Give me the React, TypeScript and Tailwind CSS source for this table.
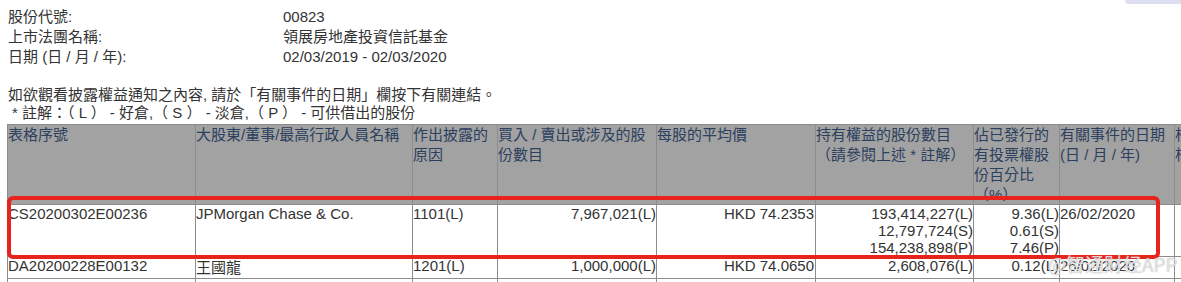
import React from "react";

const font = "font-['Liberation_Sans','Noto_Sans_CJK_TC',sans-serif]";

// column widths include the right border of each cell
const cols = "grid-cols-[188px_217px_85px_159px_159px_158px_86px_115px_120px]";

const headers: React.ReactNode[] = [
  "表格序號",
  "大股東/董事/最高行政人員名稱",
  <>作出披露的<br />原因</>,
  <>買入 / 賣出或涉及的股<br />份數目</>,
  "每股的平均價",
  <>持有權益的股份數目<br />（請參閱上述 * 註解）</>,
  <>佔已發行的<br />有投票權股<br />份百分比<br />（%）</>,
  <>有關事件的日期<br />(日 / 月 / 年)</>,
  <>根據<br />根據</>,
];

type Row = {
  serial: string;
  name: string;
  reason: string;
  shares: string;
  price: string;
  held: string[];
  pct: string[];
  date: string;
};

const rows: Row[] = [
  {
    serial: "CS20200302E00236",
    name: "JPMorgan Chase & Co.",
    reason: "1101(L)",
    shares: "7,967,021(L)",
    price: "HKD 74.2353",
    held: ["193,414,227(L)", "12,797,724(S)", "154,238,898(P)"],
    pct: ["9.36(L)", "0.61(S)", "7.46(P)"],
    date: "26/02/2020",
  },
  {
    serial: "DA20200228E00132",
    name: "王國龍",
    reason: "1201(L)",
    shares: "1,000,000(L)",
    price: "HKD 74.0650",
    held: ["2,608,076(L)"],
    pct: ["0.12(L)"],
    date: "26/02/2020",
  },
];

const cell = "border-r border-b border-[#8c8c8c] overflow-hidden whitespace-nowrap";

export default function App() {
  return (
    <div className={`relative w-[1181px] h-[282px] overflow-hidden bg-white text-[15px] text-[#333] ${font}`}>
      {/* top corner tab */}
      <div className="absolute right-0 top-0 w-[56px] h-[4px] rounded-bl-[6px] bg-[#dedef2]" />

      <div className="pt-[7px] pl-[8px] leading-[20px]">
        <div className="flex">
          <div className="w-[275px]">股份代號:</div>
          <div>00823</div>
        </div>
        <div className="flex">
          <div className="w-[275px]">上市法團名稱:</div>
          <div>領展房地產投資信託基金</div>
        </div>
        <div className="flex">
          <div className="w-[275px]">日期 (日 / 月 / 年):</div>
          <div>02/03/2019 - 02/03/2020</div>
        </div>
      </div>

      <div className="mt-[19px] pl-[8px] leading-[18px]">
        <div>如欲觀看披露權益通知之內容, 請於「有關事件的日期」欄按下有關連結。</div>
        <div className="pl-[4px] whitespace-pre">* 註解：（ L ） - 好倉,（ S ） - 淡倉,（ P ） - 可供借出的股份</div>
      </div>

      <div className={`mt-[2px] ml-[7px] grid w-max ${cols} border-t border-l border-[#8c8c8c]`}>
        {headers.map((h, i) => (
          <div key={i} className={`${cell} h-[80px] bg-[#a2a2a2] text-[#2b3f5e] leading-[20px]`}>
            {h}
          </div>
        ))}

        {rows.map((r, i) => {
          const pad = i === rows.length - 1 ? "pb-[2px]" : "";
          return (
            <React.Fragment key={r.serial}>
              <div className={`${cell} ${pad} leading-[17px]`}>{r.serial}</div>
              <div className={`${cell} ${pad} leading-[17px] ${i === 1 ? "pt-[2px]" : ""}`}>{r.name}</div>
              <div className={`${cell} ${pad} leading-[17px]`}>{r.reason}</div>
              <div className={`${cell} ${pad} leading-[17px] text-right`}>{r.shares}</div>
              <div className={`${cell} ${pad} leading-[17px] text-right pr-[1px]`}>{r.price}</div>
              <div className={`${cell} ${pad} leading-[17px] text-right`}>
                {r.held.map((h) => (
                  <div key={h}>{h}</div>
                ))}
              </div>
              <div className={`${cell} ${pad} leading-[17px] text-right`}>
                {r.pct.map((p) => (
                  <div key={p}>{p}</div>
                ))}
              </div>
              <div className={`${cell} ${pad} leading-[17px]`}>{r.date}</div>
              <div className={`${cell} ${pad} leading-[17px]`} />
            </React.Fragment>
          );
        })}
        {Array.from({ length: 9 }).map((_, i) => (
          <div key={"e" + i} className={`${cell} h-[20px]`} />
        ))}
      </div>

      {/* red highlight drawn over the table */}
      <div className="absolute left-[7px] top-[196px] w-[1153px] h-[63px] rounded-[6px] border-[4px] border-[#e8231b]" />

      {/* watermark */}
      <div className="absolute left-[1048px] top-[253px] text-[19px] leading-[22px] text-white/60 [text-shadow:0_0_1px_#a8a8a8] font-['Noto_Sans_CJK_SC',sans-serif]">
        @智通财经APP
      </div>
    </div>
  );
}
